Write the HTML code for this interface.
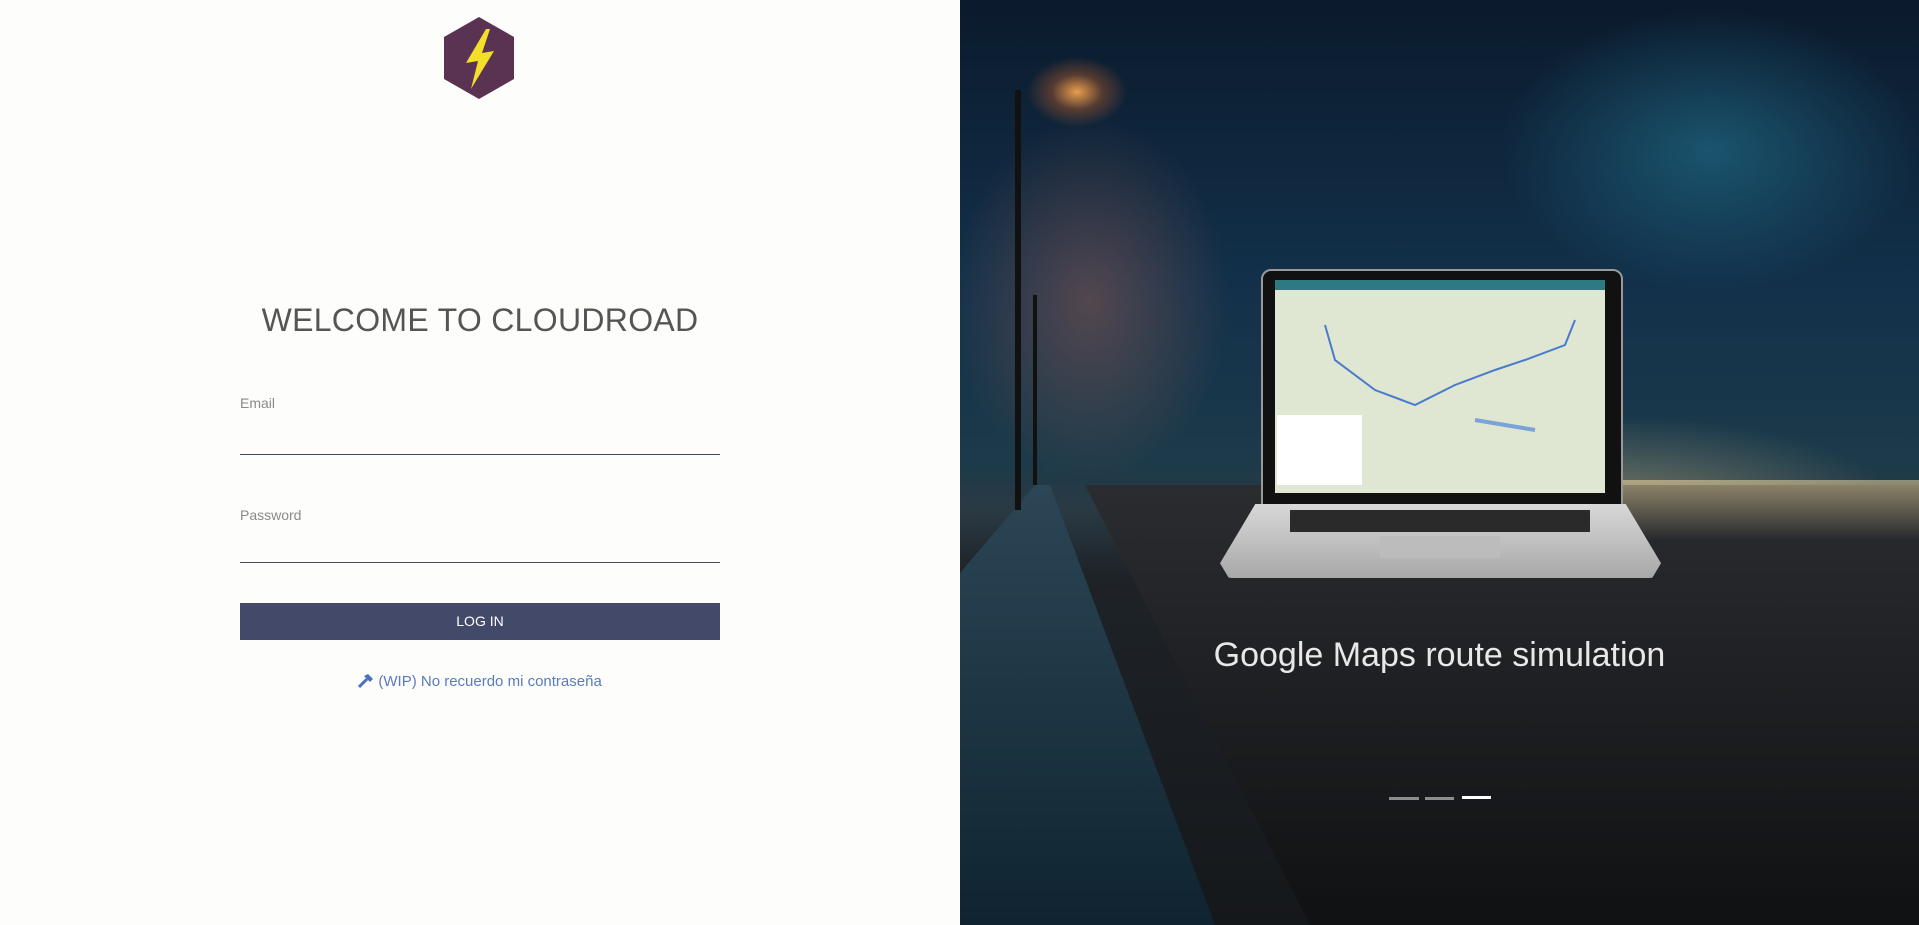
<!DOCTYPE html>
<html><head><meta charset="utf-8"><style>
*{margin:0;padding:0;box-sizing:border-box}
body{width:1919px;height:925px;overflow:hidden;font-family:"Liberation Sans",sans-serif;background:#fdfdfb;position:relative}
.left{position:absolute;left:0;top:0;width:960px;height:925px;background:#fdfdfb}
.title{position:absolute;left:0;width:960px;top:302px;text-align:center;font-size:32px;color:#555;letter-spacing:0.3px}
.lbl{position:absolute;left:240px;font-size:14px;color:#8a8a8a}
.line{position:absolute;left:240px;width:480px;height:1px;background:#444a5a}
.btn{position:absolute;left:240px;top:603px;width:480px;height:37px;background:#434a69;color:#fff;font-size:14px;text-align:center;line-height:37px}
.link{position:absolute;left:0;width:960px;top:673px;text-align:center;font-size:15px;color:#5b7bbd}
.right{position:absolute;left:960px;top:0;width:959px;height:925px;overflow:hidden;
background:
radial-gradient(ellipse 50px 35px at 117px 92px,rgba(255,170,80,.9),rgba(255,120,40,.3) 50%,transparent),
radial-gradient(ellipse 200px 260px at 130px 300px,rgba(230,120,90,.3),transparent 70%),
radial-gradient(ellipse 300px 200px at 750px 150px,rgba(40,140,170,.45),transparent 70%),
radial-gradient(ellipse 400px 120px at 650px 500px,rgba(255,220,150,.35),transparent 70%),
linear-gradient(180deg,#0b1a2c 0%,#12304a 30%,#1c3a4a 50%,#2a3a44 55%,#1e2328 62%,#15181b 100%)}
.road{position:absolute;left:80px;top:485px;width:900px;height:440px;background:linear-gradient(180deg,#2a2c30,#0f1113);clip-path:polygon(5% 0,100% 0,100% 100%,30% 100%)}
.walk{position:absolute;left:0;top:485px;width:300px;height:440px;background:linear-gradient(180deg,#2c4656,#0f2430);clip-path:polygon(25% 0,30% 0,85% 100%,0 100%,0 20%)}
.pole{position:absolute;background:#111;width:6px}
</style></head><body>
<div class="left">
<svg style="position:absolute;left:444px;top:17px" width="70" height="82" viewBox="0 0 70 82"><polygon points="35,0 70,20 70,62 35,82 0,62 0,20" fill="#5a3352"/><polygon points="42,12 22,46 34,44 27,72 50,34 38,36 46,12" fill="#f2df2a"/></svg>
<div class="title">WELCOME TO CLOUDROAD</div>
<div class="lbl" style="top:395px">Email</div>
<div class="line" style="top:454px"></div>
<div class="lbl" style="top:507px">Password</div>
<div class="line" style="top:562px"></div>
<div class="btn">LOG IN</div>
<div class="link"><svg width="16" height="15" viewBox="0 0 16 15" style="vertical-align:-2px"><path d="M1 14 L9 6" stroke="#4a72c0" stroke-width="3"/><path d="M6 3 L10 1 L15 6 L12 9 Z" fill="#4a72c0"/></svg> (WIP) No recuerdo mi contraseña</div>
</div>
<div class="right">
<div class="road"></div>
<div class="walk"></div>
<div class="pole" style="left:55px;top:90px;height:420px"></div>
<div class="pole" style="left:73px;top:295px;height:190px;width:4px"></div>
<div style="position:absolute;left:400px;top:480px;width:559px;height:60px;background:linear-gradient(180deg,rgba(255,230,170,.5),transparent)"></div>
<div style="position:absolute;left:301px;top:269px;width:362px;height:237px;background:#111;border:2px solid #999;border-radius:10px 10px 0 0"></div>
<div style="position:absolute;left:315px;top:280px;width:330px;height:213px;background:#dfe7d2">
<div style="height:10px;background:#2e7a84"></div>
<svg width="330" height="203"><path d="M50 35 L60 70 L100 100 L140 115 L180 95 L220 80 L250 70 L290 55 L300 30" stroke="#4a7ad0" stroke-width="2" fill="none"/><rect x="2" y="125" width="85" height="70" fill="#fff"/><path d="M200 130 L260 140" stroke="#7aa3d8" stroke-width="4"/></svg>
</div>
<div style="position:absolute;left:260px;top:504px;width:441px;height:74px;background:linear-gradient(180deg,#d8d8d8,#a8a8a8);clip-path:polygon(8% 0,92% 0,100% 80%,98% 100%,2% 100%,0 80%);border-radius:0 0 12px 12px"></div>
<div style="position:absolute;left:330px;top:510px;width:300px;height:22px;background:#2a2a2a"></div>
<div style="position:absolute;left:420px;top:536px;width:120px;height:22px;background:#bcbcbc"></div>
<div style="position:absolute;left:0;top:636px;width:959px;text-align:center;font-size:34px;color:#e8e8e8">Google Maps route simulation</div>
<div style="position:absolute;left:429px;top:797px;width:30px;height:3px;background:#8e8e8e"></div>
<div style="position:absolute;left:465px;top:797px;width:29px;height:3px;background:#8e8e8e"></div>
<div style="position:absolute;left:502px;top:796px;width:29px;height:3px;background:#fff"></div>
</div>
</body></html>
